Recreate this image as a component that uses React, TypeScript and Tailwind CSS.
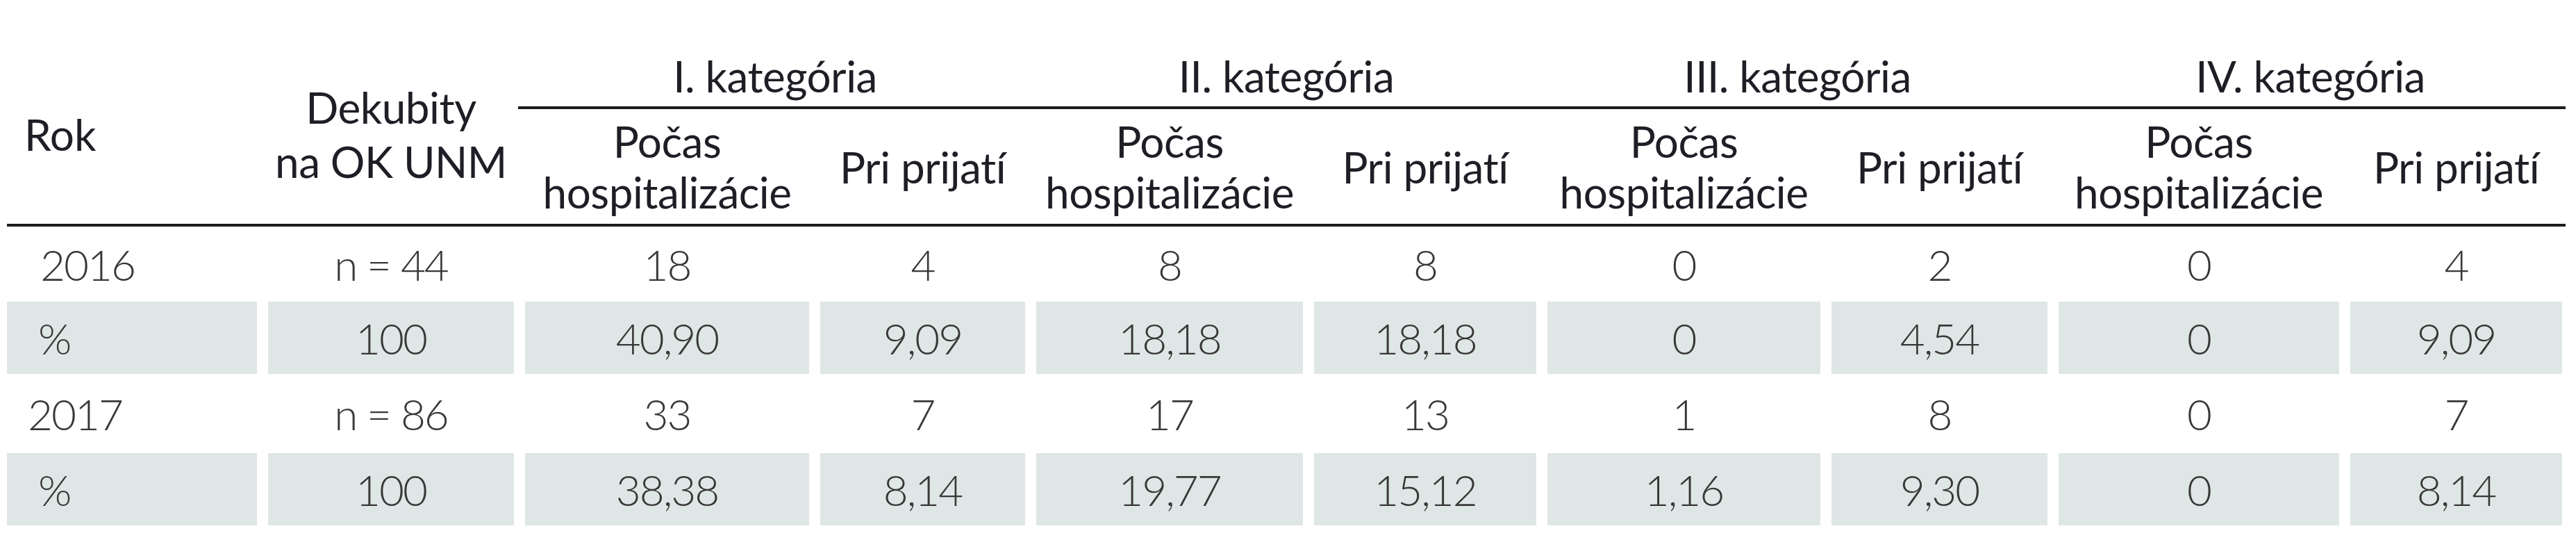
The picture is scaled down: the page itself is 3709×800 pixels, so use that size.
import React from "react";

const cols =
  "grid grid-cols-[360px_354px_409px_295px_384px_320px_393px_311px_404px_305px] gap-x-[16px]";

const font = { fontFamily: "Lato, 'Open Sans', sans-serif" };

type Row = { label: string; pl: string; n: string; vals: string[]; gray: boolean; h: string };

const rows: Row[] = [
  { label: "2016", pl: "pl-[48px]", n: "n = 44", vals: ["18", "4", "8", "8", "0", "2", "0", "4"], gray: false, h: "h-[108px]" },
  { label: "%", pl: "pl-[45px]", n: "100", vals: ["40,90", "9,09", "18,18", "18,18", "0", "4,54", "0", "9,09"], gray: true, h: "h-[104px]" },
  { label: "2017", pl: "pl-[30px]", n: "n = 86", vals: ["33", "7", "17", "13", "1", "8", "0", "7"], gray: false, h: "h-[114px]" },
  { label: "%", pl: "pl-[45px]", n: "100", vals: ["38,38", "8,14", "19,77", "15,12", "1,16", "9,30", "0", "8,14"], gray: true, h: "h-[104px]" },
];

const cats = ["I. kategória", "II. kategória", "III. kategória", "IV. kategória"];

export default function App() {
  return (
    <div className="w-[3709px] h-[800px] bg-white pl-[10px] pt-[64px] text-[62px] text-[#1e1e26]" style={font}>
      <div className={`${cols} grid-rows-[89px_4px_165px]`}>
        <div className="row-start-1 row-span-3 col-start-1 flex items-center pl-[25px] leading-none">Rok</div>
        <div className="row-start-1 row-span-3 col-start-2 flex items-center justify-center text-center leading-[78px] tracking-[-0.5px]">
          <div>
            Dekubity
            <br />
            na OK UNM
          </div>
        </div>
        {cats.map((c, i) => (
          <div
            key={c}
            className={`row-start-1 col-span-2 flex items-center justify-center whitespace-nowrap leading-none tracking-[-0.5px] ${
              ["col-start-3", "col-start-5", "col-start-7", "col-start-9"][i]
            }`}
          >
            {c}
          </div>
        ))}
        <div className="row-start-2 col-start-3 col-span-8 ml-[-10px] mr-[-5px] bg-[#1c1c1c]" />
        {[0, 1, 2, 3].map((i) => (
          <React.Fragment key={i}>
            <div
              className={`row-start-3 flex items-center justify-center text-center leading-[73px] whitespace-nowrap tracking-[-0.5px] ${
                ["col-start-3", "col-start-5", "col-start-7", "col-start-9"][i]
              }`}
            >
              <div>
                Počas
                <br />
                hospitalizácie
              </div>
            </div>
            <div
              className={`row-start-3 flex items-center justify-center whitespace-nowrap leading-none tracking-[-0.5px] ${
                ["col-start-4", "col-start-6", "col-start-8", "col-start-10"][i]
              }`}
            >
              Pri prijatí
            </div>
          </React.Fragment>
        ))}
      </div>
      <div className="w-[3684px] h-[4px] bg-[#1c1c1c]" />
      {rows.map((r, ri) => (
        <div key={ri} className={`${cols} ${r.h} font-light text-[#383838] tracking-[-2px]`}>
          <div className={`flex items-center ${r.pl} ${r.gray ? "bg-[#dfe6e6]" : ""}`}>{r.label}</div>
          <div className={`flex items-center justify-center ${r.gray ? "bg-[#dfe6e6]" : ""}`}>{r.n}</div>
          {r.vals.map((v, vi) => (
            <div key={vi} className={`flex items-center justify-center ${r.gray ? "bg-[#dfe6e6]" : ""}`}>
              {v}
            </div>
          ))}
        </div>
      ))}
    </div>
  );
}
